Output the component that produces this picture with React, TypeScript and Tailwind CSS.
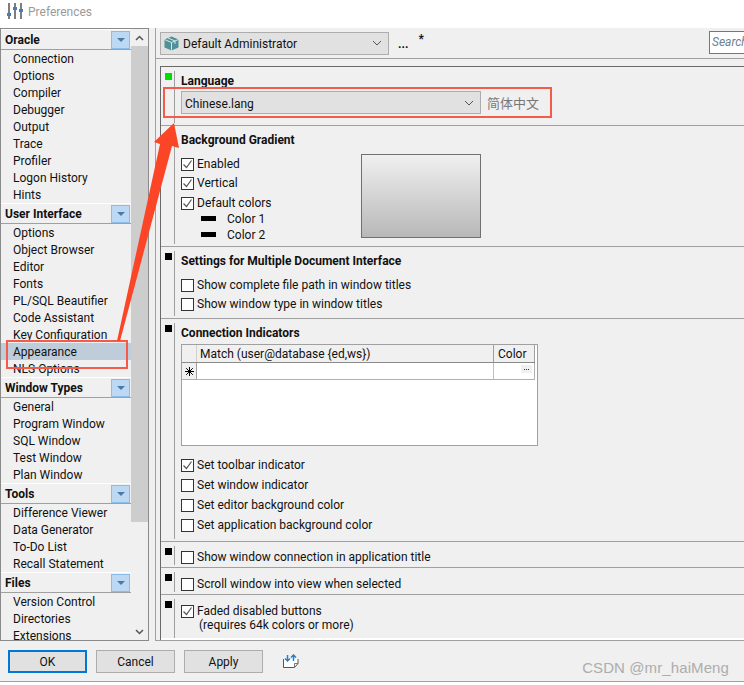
const font = "font-['Roboto','Noto_Sans',sans-serif]";

const groups = [
  { name: "Oracle", items: ["Connection", "Options", "Compiler", "Debugger", "Output", "Trace", "Profiler", "Logon History", "Hints"] },
  { name: "User Interface", items: ["Options", "Object Browser", "Editor", "Fonts", "PL/SQL Beautifier", "Code Assistant", "Key Configuration", "Appearance", "NLS Options"] },
  { name: "Window Types", items: ["General", "Program Window", "SQL Window", "Test Window", "Plan Window"] },
  { name: "Tools", items: ["Difference Viewer", "Data Generator", "To-Do List", "Recall Statement"] },
  { name: "Files", items: ["Version Control", "Directories", "Extensions"] },
];

function Check({ label, checked }: { label: string; checked?: boolean }) {
  return (
    <div className="flex h-5 items-center gap-[3px]">
      <div className="flex h-[13px] w-[13px] shrink-0 items-center justify-center border border-[#333] bg-white">
        {checked && (
          <svg width="11" height="11" viewBox="0 0 11 11" fill="none" stroke="#555" strokeWidth="1.2">
            <path d="M1.5 5.5l3 3 5-7" />
          </svg>
        )}
      </div>
      <span>{label}</span>
    </div>
  );
}

function Section({ h, dot, children }: { h: string; dot?: string; children: React.ReactNode }) {
  return (
    <div className={`flex border-b border-[#a0a0a0] ${h}`}>
      <div className="mb-0.5 mt-1 w-[14px] shrink-0 border-r border-[#a0a0a0] pl-1 pt-0.5">
        <div className={`h-[7px] w-[7px] ${dot ?? "bg-black"}`} />
      </div>
      <div className="min-w-0 flex-1 pl-1.5">{children}</div>
    </div>
  );
}

function Title({ children }: { children: React.ReactNode }) {
  return <div className="pt-1 font-bold leading-5">{children}</div>;
}

function Chevron() {
  return (
    <svg width="10" height="6" viewBox="0 0 10 6" fill="none" stroke="#555" strokeWidth="1">
      <path d="M1 1l4 4 4-4" />
    </svg>
  );
}

function Btn({ label, active }: { label: string; active?: boolean }) {
  return (
    <div
      className={`flex h-[23px] w-[79px] items-center justify-center bg-[#e1e1e1] pt-px ${
        active ? "border-2 border-[#0078d7]" : "border border-[#adadad]"
      }`}
    >
      {label}
    </div>
  );
}

export default function App() {
  return (
    <div className={`relative flex h-[685px] w-[744px] flex-col overflow-hidden bg-white pb-[3px] text-[12px] text-[#111] ${font}`}>
      {/* title bar */}
      <div className="flex h-7 shrink-0 items-start gap-[5px] pl-[7px] pt-[3px]">
        <svg width="16" height="16" viewBox="0 0 16 16">
          <path d="M1 0h2v16H1zM7 0h2v16H7zM13 0h2v16h-2z" fill="#7d7d7d" />
          <path d="M0 10h4v3H0zM6 4h4v3H6zM12 6h4v3h-4z" fill="#3f7fbf" />
        </svg>
        <span className="text-[12px] leading-[18px] text-[#9a9a9a]">Preferences</span>
      </div>

      <div className="flex min-h-0 flex-1 flex-col bg-[#f0f0f0]">
        <div className="flex min-h-0 flex-1">
          {/* tree of groups */}
          <div className="flex h-[613px] w-[149px] shrink-0 border border-[#8a8a8a]">
            <div className="min-w-0 flex-1 overflow-hidden">
              {groups.map((g) => (
                <div key={g.name}>
                  <div className="flex h-[21px] items-center justify-between border-b border-[#a0a0a0] border-t border-t-white pl-1 pr-px font-bold">
                    <span>{g.name}</span>
                    <div className="flex h-[18px] w-[19px] items-center justify-center border border-[#8cbcea] bg-[#bcd8f2]">
                      <div className="h-0 w-0 border-x-[4px] border-t-[4px] border-x-transparent border-t-[#4a7aa8]" />
                    </div>
                  </div>
                  {g.items.map((it) => (
                    <div key={it} className={`h-[17px] pl-3 leading-[19px] ${it === "Appearance" ? "bg-[#bfcddb]" : ""}`}>
                      {it}
                    </div>
                  ))}
                </div>
              ))}
            </div>
            <div className="flex w-[17px] shrink-0 flex-col bg-[#f0f0f0]">
              <div className="flex h-[17px] items-center justify-center">
                <svg width="9" height="6" viewBox="0 0 9 6" fill="none" stroke="#555" strokeWidth="1.5"><path d="M1 5l3.5-3.5L8 5" /></svg>
              </div>
              <div className="h-[476px] bg-[#cdcdcd]" />
              <div className="flex-1" />
              <div className="flex h-[17px] items-center justify-center">
                <svg width="9" height="6" viewBox="0 0 9 6" fill="none" stroke="#555" strokeWidth="1.5"><path d="M1 1l3.5 3.5L8 1" /></svg>
              </div>
            </div>
          </div>

          {/* right side */}
          <div className="ml-[6px] flex h-[613px] min-w-0 flex-1 flex-col border-b border-l border-[#a0a0a0]">
            <div className="flex h-[31px] shrink-0 items-center border-b border-[#a0a0a0] pl-1">
              <div className="flex h-[23px] w-[229px] items-center justify-between border border-[#adadad] bg-[#e1e1e1] pl-[3px] pr-1.5">
                <div className="flex items-center gap-[4px]">
                  <svg width="15" height="15" viewBox="0 0 15 15">
                    <path d="M7.5 0.5L14.5 3.5v8L7.5 14.5 0.5 11.5v-8z" fill="#4f9198" />
                    <path d="M0.5 3.5l7 3 7-3M7.5 6.5v8M4 2l7 3v3" stroke="#d6e6e8" strokeWidth="1" fill="none" />
                  </svg>
                  <span className="pt-0.5">Default Administrator</span>
                </div>
                <Chevron />
              </div>
              <span className="ml-[9px] mt-px font-bold leading-none">...</span>
              <span className="mb-2 ml-[10px] font-bold leading-none">*</span>
              <div className="ml-auto mb-px h-[23px] w-[35px] overflow-hidden whitespace-nowrap border border-r-0 border-[#777] bg-white pl-0.5 italic leading-5 text-[#6d7f95]">
                Search
              </div>
            </div>

            <div className="ml-1 mt-[7px] flex min-h-0 flex-1 flex-col border-l border-t border-[#696969]">
              <Section h="h-[59px]" dot="bg-[#00e000]">
                <Title>Language</Title>
                <div className="flex items-center gap-[6px]">
                  <div className="flex h-[23px] w-[300px] items-center justify-between border border-[#adadad] bg-[#e1e1e1] pl-[3px] pr-1.5">
                    <span className="pt-0.5">Chinese.lang</span>
                    <Chevron />
                  </div>
                  <span className="font-['Noto_Sans_CJK_SC',sans-serif] text-[13px] text-[#777]">简体中文</span>
                </div>
              </Section>

              <Section h="h-[121px]">
                <Title>Background Gradient</Title>
                <div className="flex pt-1">
                  <div className="w-[180px]">
                    <Check label="Enabled" checked />
                    <div className="-mt-px"><Check label="Vertical" checked /></div>
                    <Check label="Default colors" checked />
                    <div className="-mt-[3px]">
                      {["Color 1", "Color 2"].map((c) => (
                        <div key={c} className="flex h-4 items-center pl-5">
                          <div className="mr-[11px] h-[5px] w-[15px] bg-black" />
                          <span className="pt-0.5">{c}</span>
                        </div>
                      ))}
                    </div>
                  </div>
                  <div className="h-[84px] w-[120px] border border-[#707070] bg-gradient-to-b from-[#f0f0f0] to-[#b8b8b8]" />
                </div>
              </Section>

              <Section h="h-[72px]">
                <Title>Settings for Multiple Document Interface</Title>
                <div className="pt-1">
                  <Check label="Show complete file path in window titles" />
                  <div className="-mt-px"><Check label="Show window type in window titles" /></div>
                </div>
              </Section>

              <Section h="h-[223px]">
                <Title>Connection Indicators</Title>
                <div className="mt-px h-[102px] w-[357px] border border-[#a0a0a0] bg-white pr-0.5">
                  <div className="flex h-[18px] border-b border-[#8a8a8a] bg-[#f0f0f0]">
                    <div className="w-[15px] border-r border-[#d0d0d0]" />
                    <div className="flex-1 border-r border-[#a0a0a0] pl-[3px] leading-[19px]">Match (user@database {"{ed,ws}"})</div>
                    <div className="w-[41px] border-r border-[#a0a0a0] pl-1 leading-[19px]">Color</div>
                  </div>
                  <div className="flex h-[17px] border-b border-[#b0b0b0]">
                    <div className="flex w-[15px] items-center justify-center border-r border-[#a0a0a0] bg-[#f0f0f0]">
                      <svg width="9" height="9" viewBox="0 0 9 9" stroke="#000" strokeWidth="1">
                        <path d="M4.5 0v9M0 4.5h9M1.2 1.2l6.6 6.6M7.8 1.2L1.2 7.8" />
                      </svg>
                    </div>
                    <div className="flex-1 border-r border-[#c0c0c0]" />
                    <div className="relative w-[41px] border-r border-[#b0b0b0]">
                      <div className="absolute right-0.5 top-0.5 flex h-[8px] w-[11px] items-center justify-center gap-px bg-[#f0f0f0]">
                        <div className="h-px w-px bg-[#333]" />
                        <div className="h-px w-px bg-[#333]" />
                        <div className="h-px w-px bg-[#333]" />
                      </div>
                    </div>
                  </div>
                </div>
                <div className="pt-[9px]">
                  <Check label="Set toolbar indicator" checked />
                  <Check label="Set window indicator" />
                  <Check label="Set editor background color" />
                  <Check label="Set application background color" />
                </div>
              </Section>

              <Section h="h-[26px]">
                <div className="pt-[5px]"><Check label="Show window connection in application title" /></div>
              </Section>
              <Section h="h-[27px]">
                <div className="pt-[6px]"><Check label="Scroll window into view when selected" /></div>
              </Section>
              <div className="flex min-h-0 flex-1 border-b-2 border-white">
                <div className="mt-1 w-[14px] shrink-0 border-r border-[#a0a0a0] pl-1 pt-0.5">
                  <div className="h-[7px] w-[7px] bg-black" />
                </div>
                <div className="pl-1.5 pt-1.5">
                  <Check label="Faded disabled buttons" checked />
                  <div className="-mt-[3px] pl-[18px] leading-[15px]">(requires 64k colors or more)</div>
                </div>
              </div>
            </div>
          </div>
        </div>

        {/* button row */}
        <div className="flex h-[41px] shrink-0 items-center gap-[9px] border-b border-[#a0a0a0] pl-2">
          <Btn label="OK" active />
          <Btn label="Cancel" />
          <Btn label="Apply" />
          <svg className="ml-[11px]" width="16" height="15" viewBox="0 0 16 15" fill="none">
            <path d="M0.5 5v8.5h11l3.5-4V5" stroke="#555" fill="#fff" />
            <path d="M11.5 13.5v-4h3.5" stroke="#777" />
            <path d="M4.5 1v6M2 4.5l2.5 2.5L7 4.5M10.5 7V1M8 3.5L10.5 1 13 3.5" stroke="#2f7fc8" strokeWidth="1.5" />
          </svg>
          <span className="ml-auto mr-[15px] mt-[14px] font-['Liberation_Sans',sans-serif] text-[15px] tracking-[0.1px] text-[#adadad]">CSDN @mr_haiMeng</span>
        </div>
      </div>

      {/* annotations drawn over the screenshot */}
      <div className="absolute left-[163px] top-[87px] h-[31px] w-[389px] border-2 border-[#f55a4a]" />
      <div className="absolute left-[6px] top-[340px] h-[29px] w-[122px] border-2 border-[#f55a4a]" />
      <svg className="absolute left-0 top-0" width="744" height="685" fill="none">
        <path d="M174 123L154 142L160 144L117 341L120 341L172 146L179 148Z" fill="#fb4526" />
      </svg>
    </div>
  );
}
